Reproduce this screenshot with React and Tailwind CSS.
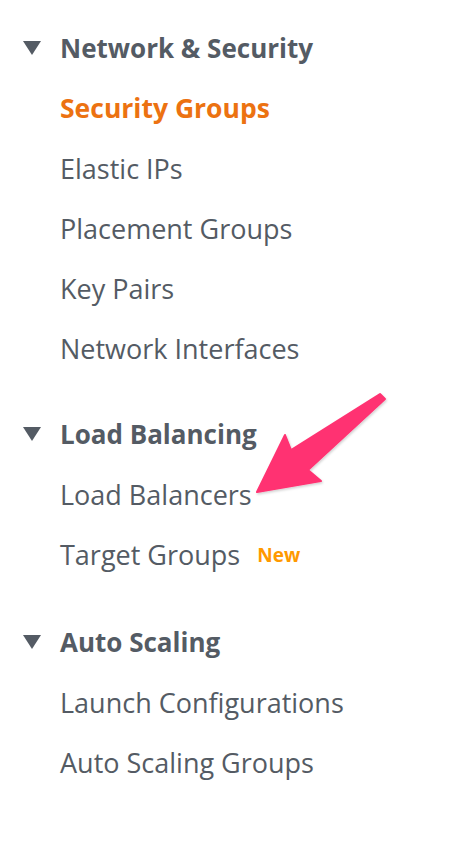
const sections = [
  {
    title: "Network & Security",
    items: [
      { label: "Security Groups", active: true },
      { label: "Elastic IPs" },
      { label: "Placement Groups" },
      { label: "Key Pairs" },
      { label: "Network Interfaces" },
    ],
  },
  {
    title: "Load Balancing",
    items: [{ label: "Load Balancers" }, { label: "Target Groups", isNew: true }],
  },
  {
    title: "Auto Scaling",
    extra: "mt-[2px]",
    items: [{ label: "Launch Configurations" }, { label: "Auto Scaling Groups" }],
  },
];

function Caret() {
  return (
    <svg width="20" height="16" viewBox="0 0 20 16" className="shrink-0">
      <polygon points="1,1 19,1 10,15" fill="#545b64" />
    </svg>
  );
}

export default function App() {
  return (
    <div
      className="relative w-[460px] h-[842px] bg-white pt-[17px] flex flex-col gap-[24px]"
      style={{ fontFamily: "'Open Sans', 'Noto Sans', sans-serif" }}
    >
      {sections.map((s) => (
        <section key={s.title} className={`flex flex-col ${s.extra || ""}`}>
          <div className="h-[62px] flex items-center pl-[22px] gap-[18px]">
            <Caret />
            <span className="text-[26px] font-bold text-[#545b64] whitespace-nowrap">{s.title}</span>
          </div>
          {s.items.map((it) => (
            <div key={it.label} className="h-[60px] flex items-center pl-[60px]">
              <span
                className={
                  it.active
                    ? "text-[26.5px] font-bold text-[#ec7211] whitespace-nowrap"
                    : "text-[27px] text-[#545b64] whitespace-nowrap"
                }
              >
                {it.label}
              </span>
              {it.isNew && (
                <span className="ml-[17px] text-[19px] font-bold text-[#ff9900]">New</span>
              )}
            </div>
          ))}
        </section>
      ))}

      {/* pink callout arrow */}
      <svg
        className="absolute left-0 top-0 pointer-events-none"
        width="460"
        height="842"
        viewBox="0 0 460 842"
      >
        <defs>
          <filter id="sh" x="-10%" y="-10%" width="130%" height="130%">
            <feDropShadow dx="1" dy="1.5" stdDeviation="1" floodColor="#000" floodOpacity="0.18" />
          </filter>
        </defs>
        <polygon
          points="380,394 385,399 308,470 321,481 257,492 285,435 291,450"
          fill="#ff3372"
          stroke="#ff3372"
          strokeLinejoin="round"
          strokeWidth="2"
          filter="url(#sh)"
        />
      </svg>
    </div>
  );
}
